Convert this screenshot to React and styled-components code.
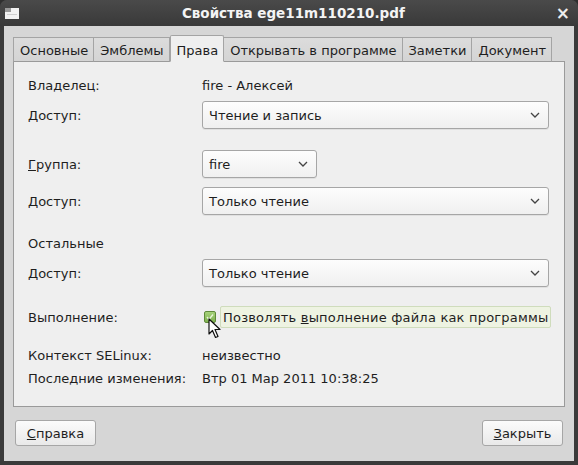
import React from 'react';
import styled, { createGlobalStyle } from 'styled-components';

const GlobalStyle = createGlobalStyle`
  html, body {
    margin: 0;
    padding: 0;
    background: #2f2f2f;
  }
  body {
    font-family: 'DejaVu Sans', 'Liberation Sans', sans-serif;
    font-size: 13px;
    color: #1e1e1e;
  }
`;

const tabs = ['Основные', 'Эмблемы', 'Права', 'Открывать в программе', 'Заметки', 'Документ'];

const Chevron = () => (
  <svg width="10" height="6" viewBox="0 0 10 6">
    <path d="M1 1 L5 5 L9 1" fill="none" stroke="#444" strokeWidth="1.3" />
  </svg>
);

const Combo = ({ text, width }) => (
  <ComboBox width={width}>
    <span>{text}</span>
    <Chevron />
  </ComboBox>
);

const App = () => {
  return (
    <>
      <GlobalStyle />
      <Window>
        <TitleBar>
          <WinIcon>
            <svg width="14" height="11" viewBox="0 0 14 11">
              <rect x="0" y="0" width="14" height="11" fill="#f2f2f2" />
              <rect x="0" y="0" width="6" height="4" fill="#9a9a9a" />
              <rect x="2" y="6" width="10" height="1" fill="#cfcfcf" />
            </svg>
          </WinIcon>
          <Title>Свойства ege11m110210.pdf</Title>
          <CloseMark>×</CloseMark>
        </TitleBar>
        <Body>
          <TabRow>
            {tabs.map((t) => (
              <Tab key={t} active={t === 'Права'}>
                {t}
              </Tab>
            ))}
          </TabRow>
          <Panel>
            <Row top={13}>
              <Label>Владелец:</Label>
              <Value>fire - Алексей</Value>
            </Row>
            <Row top={6}>
              <Label>Доступ:</Label>
              <Combo text="Чтение и запись" />
            </Row>
            <Row top={21}>
              <Label>
                <u>Г</u>руппа:
              </Label>
              <Combo text="fire" width={115} />
            </Row>
            <Row top={9}>
              <Label>Доступ:</Label>
              <Combo text="Только чтение" />
            </Row>
            <Row top={18}>
              <Label>Остальные</Label>
            </Row>
            <Row top={6}>
              <Label>Доступ:</Label>
              <Combo text="Только чтение" />
            </Row>
            <Row top={19}>
              <Label>Выполнение:</Label>
              <CheckWrap>
                <CheckBox>
                  <svg width="10" height="10" viewBox="0 0 10 10">
                    <path d="M2 5 L4 7.5 L8 2.5" fill="none" stroke="#e8f5d8" strokeWidth="1.4" />
                  </svg>
                </CheckBox>
                <CheckLabel>
                  <span>
                    Позволять <u>в</u>ыполнение файла как программы
                  </span>
                </CheckLabel>
                <Cursor>
                  <svg width="14" height="21" viewBox="0 0 14 21">
                    <path
                      d="M1 1 L1 16 L4.5 12.5 L7.5 19.5 L10 18.5 L7 11.5 L12 11.5 Z"
                      fill="#fff"
                      stroke="#111"
                      strokeWidth="1.2"
                      strokeLinejoin="round"
                    />
                  </svg>
                </Cursor>
              </CheckWrap>
            </Row>
            <Row top={17}>
              <Label>Контекст SELinux:</Label>
              <Value>неизвестно</Value>
            </Row>
            <Row top={3}>
              <Label>Последние изменения:</Label>
              <Value>Втр 01 Мар 2011 10:38:25</Value>
            </Row>
          </Panel>
          <ButtonRow>
            <Button>
              <span>
                <u>С</u>правка
              </span>
            </Button>
            <Button>
              <span>
                <u>З</u>акрыть
              </span>
            </Button>
          </ButtonRow>
        </Body>
      </Window>
    </>
  );
};

const Window = styled.div`
  width: 578px;
  height: 465px;
  box-sizing: border-box;
  display: flex;
  flex-direction: column;
  background: #3a3a3a;
  border-radius: 7px 7px 0 0;
  overflow: hidden;
`;

const TitleBar = styled.div`
  height: 26px;
  flex: none;
  display: flex;
  align-items: center;
  padding: 0 8px 0 5px;
  background: linear-gradient(#4a4a4a, #393939);
  color: #fff;
`;

const WinIcon = styled.div`
  width: 14px;
  height: 11px;
  display: flex;
`;

const Title = styled.div`
  flex: 1;
  text-align: center;
  font-weight: bold;
  font-size: 13.5px;
  padding-left: 12px;
  color: #f4f4f4;
`;

const CloseMark = styled.div`
  font-weight: bold;
  font-size: 17px;
  line-height: 1;
  color: #eee;
`;

const Body = styled.div`
  flex: 1;
  margin: 0 4px 4px 4px;
  background: #d6d6d6;
  padding: 10px 9px 0 9px;
  display: flex;
  flex-direction: column;
`;

const TabRow = styled.div`
  display: flex;
  align-items: flex-end;
  height: 26px;
  position: relative;
  z-index: 1;
  margin-bottom: -1px;
`;

const Tab = styled.div`
  box-sizing: border-box;
  height: ${(p) => (p.active ? '27px' : '25px')};
  padding: ${(p) => (p.active ? '3px 5px 0 6px' : '2px 5px 0 6px')};
  display: flex;
  align-items: center;
  border: 1px solid #a4a4a4;
  border-left-width: ${(p) => (p.active ? '1px' : '0')};
  border-bottom: ${(p) => (p.active ? '1px solid #efefef' : '1px solid #9a9a9a')};
  border-radius: ${(p) => (p.active ? '2px 2px 0 0' : '0')};
  background: ${(p) => (p.active ? '#efefef' : 'linear-gradient(#dcdcdc, #d4d4d4)')};
  color: #1e1e1e;
  white-space: nowrap;

  &:first-child {
    border-left-width: 1px;
  }
`;

const Panel = styled.div`
  height: 346px;
  box-sizing: border-box;
  background: #efefef;
  border: 1px solid #9a9a9a;
  padding: 0 15px 0 14px;
  display: flex;
  flex-direction: column;
`;

const Row = styled.div`
  display: grid;
  grid-template-columns: 174px 1fr;
  align-items: center;
  min-height: 20px;
  margin-top: ${(p) => p.top}px;
`;

const Label = styled.div`
  white-space: nowrap;
`;

const Value = styled.div`
  white-space: nowrap;
`;

const ComboBox = styled.div`
  box-sizing: border-box;
  height: 28px;
  width: ${(p) => (p.width ? `${p.width}px` : '100%')};
  display: flex;
  align-items: center;
  justify-content: space-between;
  padding: 0 8px 0 6px;
  border: 1px solid #a6a6a6;
  border-radius: 3px;
  background: linear-gradient(#fdfdfd, #f0f0f0);
  box-shadow: 0 1px 0 rgba(0, 0, 0, 0.06);
`;

const CheckWrap = styled.div`
  position: relative;
  display: flex;
  align-items: center;
  height: 22px;
`;

const CheckBox = styled.div`
  box-sizing: border-box;
  width: 12px;
  height: 12px;
  margin-left: 2px;
  border: 1px solid #5f8a3a;
  border-radius: 2px;
  background: linear-gradient(#a6d27a, #7fb150);
  display: flex;
  align-items: center;
  justify-content: center;
`;

const CheckLabel = styled.div`
  box-sizing: border-box;
  height: 22px;
  margin-left: 4px;
  padding: 0 2px;
  display: flex;
  align-items: center;
  border: 1px solid #cfdcbc;
  border-radius: 2px;
  background: #eef3e2;
  white-space: nowrap;
  letter-spacing: 0.2px;
`;

const Cursor = styled.div`
  position: absolute;
  left: 6px;
  top: 12px;
  width: 14px;
  height: 21px;
`;

const ButtonRow = styled.div`
  display: flex;
  justify-content: space-between;
  margin-top: 13px;
  padding: 0 2px;
`;

const Button = styled.div`
  box-sizing: border-box;
  height: 26px;
  min-width: 81px;
  display: flex;
  align-items: center;
  justify-content: center;
  padding: 0 10px;
  border: 1px solid #a6a6a6;
  border-radius: 3px;
  background: linear-gradient(#fbfbfb, #e9e9e9);
`;

export default App;
